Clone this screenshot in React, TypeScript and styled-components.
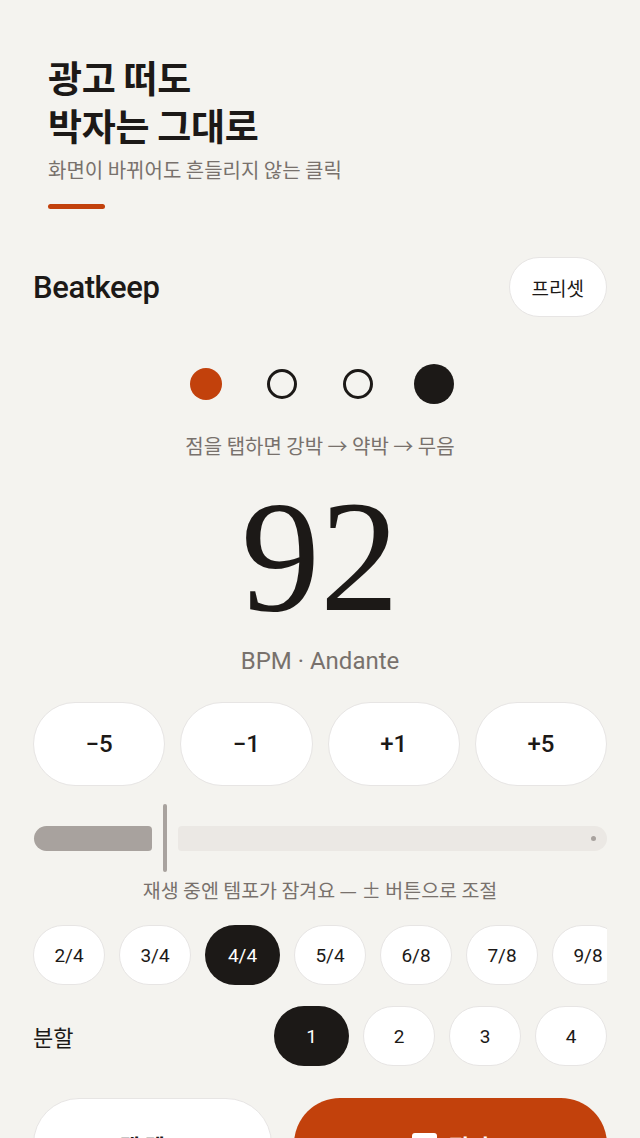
import React from 'react';
import styled, { createGlobalStyle } from 'styled-components';

const ink = '#1c1917';
const muted = '#78716c';
const accent = '#c2410c';
const line = '#e7e5e4';

const GlobalStyle = createGlobalStyle`
  html, body {
    margin: 0;
    padding: 0;
    background: #f4f3ef;
  }
  body {
    font-family: Roboto, "Noto Sans CJK KR", sans-serif;
    color: ${ink};
    -webkit-font-smoothing: antialiased;
  }
  * { box-sizing: border-box; }
`;

const Page = styled.main`
  width: 640px;
  height: 1138px;
  overflow: hidden;
  padding: 53px 33px 0;
  display: flex;
  flex-direction: column;

  & > * {
    flex-shrink: 0;
  }
`;

const Hero = styled.section`
  padding-left: 15px;
  display: flex;
  flex-direction: column;
`;

const Title = styled.h1`
  margin: 0;
  font-family: "Noto Sans CJK KR", sans-serif;
  font-size: 37px;
  font-weight: 700;
  line-height: 48px;
  letter-spacing: -0.3px;
`;

const Subtitle = styled.p`
  margin: 8px 0 0;
  font-family: "Noto Sans CJK KR", sans-serif;
  font-size: 20px;
  line-height: 26px;
  color: ${muted};
`;

const AccentBar = styled.div`
  margin-top: 21px;
  width: 57px;
  height: 5px;
  border-radius: 3px;
  background: ${accent};
`;

const TopBar = styled.header`
  margin-top: 48px;
  display: flex;
  align-items: center;
  justify-content: space-between;
`;

const Brand = styled.div`
  font-family: Roboto, sans-serif;
  font-size: 31px;
  font-weight: 500;
  letter-spacing: -0.4px;
`;

const PillButton = styled.button`
  height: 60px;
  padding: 0 22px;
  border-radius: 30px;
  border: 1.5px solid ${line};
  background: #fff;
  color: ${ink};
  font-family: "Noto Sans CJK KR", sans-serif;
  font-size: 19px;
  font-weight: 400;
`;

const Beats = styled.div`
  margin-top: 47px;
  height: 40px;
  display: flex;
  justify-content: center;
  gap: 32px;
`;

const BeatCell = styled.div`
  width: 44px;
  display: flex;
  align-items: center;
  justify-content: center;
`;

type BeatKind = 'accent' | 'normal' | 'mute' | 'strong';

const Dot = styled.span<{ $kind: BeatKind }>`
  display: block;
  border-radius: 50%;
  width: ${p => (p.$kind === 'strong' ? 40 : p.$kind === 'accent' ? 32 : 30)}px;
  height: ${p => (p.$kind === 'strong' ? 40 : p.$kind === 'accent' ? 32 : 30)}px;
  background: ${p => (p.$kind === 'accent' ? accent : p.$kind === 'strong' ? ink : 'transparent')};
  border: ${p => (p.$kind === 'normal' ? `3px solid ${ink}` : 'none')};
`;

const Hint = styled.p`
  margin: 29px 0 0;
  text-align: center;
  font-family: "Noto Sans CJK KR", sans-serif;
  font-size: 20px;
  line-height: 26px;
  color: ${muted};
`;

const Tempo = styled.div`
  margin-top: 15px;
  height: 166px;
  text-align: center;
  font-family: "Liberation Serif", serif;
  font-size: 158px;
  line-height: 166px;
  color: ${ink};
`;

const TempoLabel = styled.div`
  margin-top: 6px;
  text-align: center;
  font-family: Roboto, sans-serif;
  font-size: 24px;
  line-height: 30px;
  color: ${muted};
`;

const StepRow = styled.div`
  margin-top: 26px;
  display: grid;
  grid-template-columns: repeat(4, 1fr);
  gap: 15px;
`;

const StepButton = styled.button`
  height: 84px;
  border-radius: 42px;
  border: 1.5px solid ${line};
  background: #fff;
  color: ${ink};
  font-family: Roboto, sans-serif;
  font-size: 24px;
  font-weight: 500;
`;

const Slider = styled.div`
  margin-top: 18px;
  height: 68px;
  display: flex;
  align-items: center;
  gap: 11px;
  padding-left: 1px;
`;

const SliderFill = styled.div`
  height: 25px;
  border-radius: 13px 4px 4px 13px;
  background: #a8a29e;
`;

const SliderHandle = styled.div`
  width: 4px;
  height: 68px;
  border-radius: 2px;
  background: #a8a29e;
`;

const SliderTrack = styled.div`
  flex: 1;
  height: 25px;
  border-radius: 4px 13px 13px 4px;
  background: #ebe8e4;
  display: flex;
  align-items: center;
  justify-content: flex-end;
  padding-right: 11px;
`;

const TrackStop = styled.span`
  width: 5px;
  height: 5px;
  border-radius: 50%;
  background: #a8a29e;
`;

const Caption = styled.p`
  margin: 5px 0 0;
  text-align: center;
  font-family: "Noto Sans CJK KR", sans-serif;
  font-size: 19.5px;
  line-height: 26px;
  color: ${muted};
`;

const ChipScroller = styled.div`
  margin-top: 22px;
  display: flex;
  gap: 14px;
  overflow: hidden;
`;

const Chip = styled.button<{ $active?: boolean }>`
  flex: 0 0 ${p => (p.$active ? 75 : 72)}px;
  height: 60px;
  border-radius: 30px;
  border: ${p => (p.$active ? 'none' : `1.5px solid ${line}`)};
  background: ${p => (p.$active ? ink : '#fff')};
  color: ${p => (p.$active ? '#fff' : ink)};
  font-family: Roboto, sans-serif;
  font-size: 19px;
  font-weight: 400;
  padding: 0;
`;

const DivisionRow = styled.div`
  margin-top: 21px;
  display: flex;
  align-items: center;
  justify-content: space-between;
`;

const RowLabel = styled.span`
  font-family: "Noto Sans CJK KR", sans-serif;
  font-size: 22px;
`;

const ChipGroup = styled.div`
  display: flex;
  gap: 14px;
`;

const ActionRow = styled.div`
  margin-top: 32px;
  display: grid;
  grid-template-columns: 239fr 313fr;
  gap: 22px;
`;

const ActionButton = styled.button<{ $primary?: boolean }>`
  height: 94px;
  border-radius: 46px;
  border: ${p => (p.$primary ? 'none' : `1.5px solid ${line}`)};
  background: ${p => (p.$primary ? accent : '#fff')};
  color: ${p => (p.$primary ? '#fff' : ink)};
  font-family: "Noto Sans CJK KR", sans-serif;
  font-size: 22px;
  font-weight: 700;
  display: flex;
  align-items: center;
  justify-content: center;
  gap: 12px;
`;

const StopIcon = styled.span`
  width: 25px;
  height: 25px;
  border-radius: 3px;
  background: #fff;
`;

const beats: BeatKind[] = ['accent', 'normal', 'normal', 'strong'];
const meters = ['2/4', '3/4', '4/4', '5/4', '6/8', '7/8', '9/8', '12/8'];
const divisions = ['1', '2', '3', '4'];

export default function App() {
  const bpm = 92;
  const fillWidth = Math.round(((bpm - 40) / (300 - 40)) * 590);

  return (
    <>
      <GlobalStyle />
      <Page>
        <Hero>
          <Title>
            광고 떠도
            <br />
            박자는 그대로
          </Title>
          <Subtitle>화면이 바뀌어도 흔들리지 않는 클릭</Subtitle>
          <AccentBar />
        </Hero>

        <TopBar>
          <Brand>Beatkeep</Brand>
          <PillButton>프리셋</PillButton>
        </TopBar>

        <Beats>
          {beats.map((b, i) => (
            <BeatCell key={i}>
              <Dot $kind={b} />
            </BeatCell>
          ))}
        </Beats>
        <Hint>점을 탭하면 강박 → 약박 → 무음</Hint>

        <Tempo>{bpm}</Tempo>
        <TempoLabel>BPM · Andante</TempoLabel>

        <StepRow>
          <StepButton>−5</StepButton>
          <StepButton>−1</StepButton>
          <StepButton>+1</StepButton>
          <StepButton>+5</StepButton>
        </StepRow>

        <Slider>
          <SliderFill style={{ width: fillWidth }} />
          <SliderHandle />
          <SliderTrack>
            <TrackStop />
          </SliderTrack>
        </Slider>
        <Caption>재생 중엔 템포가 잠겨요 — ± 버튼으로 조절</Caption>

        <ChipScroller>
          {meters.map(m => (
            <Chip key={m} $active={m === '4/4'}>
              {m}
            </Chip>
          ))}
        </ChipScroller>

        <DivisionRow>
          <RowLabel>분할</RowLabel>
          <ChipGroup>
            {divisions.map(d => (
              <Chip key={d} $active={d === '1'}>
                {d}
              </Chip>
            ))}
          </ChipGroup>
        </DivisionRow>

        <ActionRow>
          <ActionButton>탭 템포</ActionButton>
          <ActionButton $primary>
            <StopIcon />
            정지
          </ActionButton>
        </ActionRow>
      </Page>
    </>
  );
}
